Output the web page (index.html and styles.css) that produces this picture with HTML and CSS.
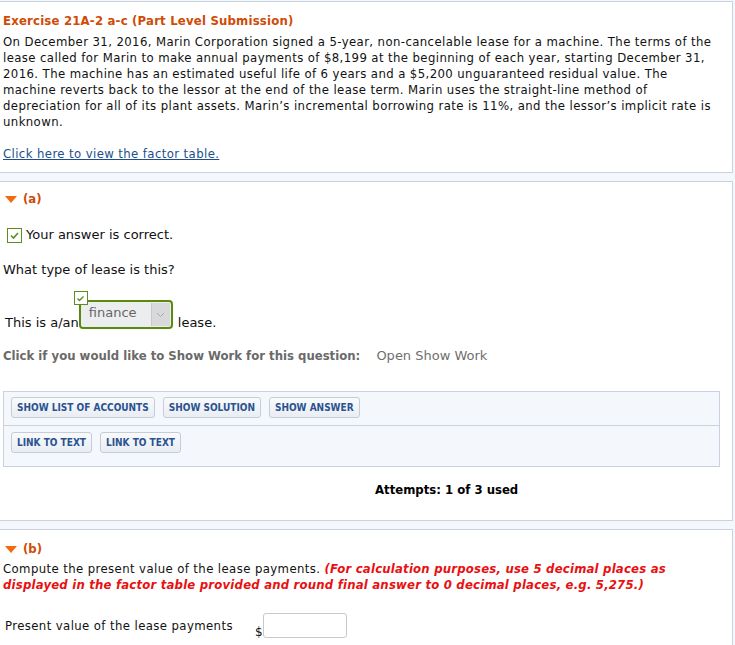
FILE: index.html
```html
<!DOCTYPE html>
<html lang="en">
<head>
  <meta charset="UTF-8">
  <title>Exercise 21A-2 a-c</title>
  <link rel="stylesheet" href="styles.css">
</head>
<body>
  <div class="panel intro">
    <h1 class="exercise-title">Exercise 21A-2 a-c (Part Level Submission)</h1>
    <p class="problem">On December 31, 2016, Marin Corporation signed a 5-year, non-cancelable lease for a machine. The terms of the lease called for Marin to make annual payments of $8,199 at the beginning of each year, starting December 31, 2016. The machine has an estimated useful life of 6 years and a $5,200 unguaranteed residual value. The machine reverts back to the lessor at the end of the lease term. Marin uses the straight-line method of depreciation for all of its plant assets. Marin’s incremental borrowing rate is 11%, and the lessor’s implicit rate is unknown.</p>
    <a class="factor-link" href="#">Click here to view the factor table.</a>
  </div>

  <div class="panel part">
    <div class="part-head"><span class="arrow"></span>(a)</div>

    <div class="correct">
      <span class="check"><svg width="11" height="11" viewBox="0 0 11 11"><path d="M2 5.5 L4.5 8 L9 3" fill="none" stroke="#5b8c1f" stroke-width="1.6"/></svg></span>
      Your answer is correct.
    </div>

    <p class="question">What type of lease is this?</p>

    <div class="answer-row">
      This is a/an
      <span class="select-wrap">
        <span class="mini-check"><svg width="9" height="9" viewBox="0 0 9 9"><path d="M1.5 4.5 L3.5 6.5 L7.5 2.5" fill="none" stroke="#5b8c1f" stroke-width="1.4"/></svg></span>
        <span class="select">
          <span class="select-value">finance</span>
          <span class="select-btn"><svg width="9" height="6" viewBox="0 0 9 6"><path d="M1 1 L4.5 4.5 L8 1" fill="none" stroke="#a9a9a9" stroke-width="1"/></svg></span>
        </span>
      </span>
      lease.
    </div>

    <div class="show-work">
      <b>Click if you would like to Show Work for this question:</b>
      <span class="open-work">Open Show Work</span>
    </div>

    <div class="tools">
      <div class="tool-row">
        <button>Show List of Accounts</button>
        <button>Show Solution</button>
        <button>Show Answer</button>
      </div>
      <div class="tool-row">
        <button>Link to Text</button>
        <button>Link to Text</button>
      </div>
    </div>

    <div class="attempts">Attempts: 1 of 3 used</div>
  </div>

  <div class="panel part last">
    <div class="part-head"><span class="arrow"></span>(b)</div>
    <p class="problem">Compute the present value of the lease payments. <em class="hint">(For calculation purposes, use 5 decimal places as displayed in the factor table provided and round final answer to 0 decimal places, e.g. 5,275.)</em></p>

    <div class="pv-row">
      <span class="pv-label">Present value of the lease payments</span>
      <span class="dollar">$</span>
      <span class="pv-input"></span>
    </div>
  </div>
</body>
</html>
```

FILE: styles.css
```css
/* General */
body {
  margin: 0;
  padding-top: 1px;
  background: #f4f7fb;
  font-family: Verdana, "DejaVu Sans", sans-serif;
  font-size: 13px;
  line-height: 16px;
  color: #111;
  width: 733px;
}

.panel {
  background: #fff;
  border: 1px solid #c9d2de;
  border-left: none;
  margin-bottom: 8px;
}

/* Intro panel */
.intro {
  padding: 11px 16px 10px 3px;
}

.exercise-title {
  margin: 0 0 5px;
  font-family: "DejaVu Sans Condensed", "DejaVu Sans", sans-serif;
  font-stretch: condensed;
  font-size: 13px;
  line-height: 16px;
  letter-spacing: 0.2px;
  color: #cf4b06;
}

.problem {
  margin: 0 0 16px;
  font-family: "DejaVu Sans Condensed", "DejaVu Sans", sans-serif;
  font-stretch: condensed;
  letter-spacing: 0.4px;
}

.factor-link {
  font-family: "DejaVu Sans Condensed", "DejaVu Sans", sans-serif;
  font-stretch: condensed;
  letter-spacing: 0.4px;
  color: #1c4f8c;
  text-decoration: underline;
}

/* Part panels */
.part {
  padding: 9px 12px 22px 3px;
}

.part-head {
  display: flex;
  align-items: center;
  font-family: "DejaVu Sans Condensed", "DejaVu Sans", sans-serif;
  font-weight: bold;
  color: #cf4b06;
  margin-bottom: 20px;
}

.arrow {
  width: 0;
  height: 0;
  margin: 0 6px 0 2px;
  border-left: 6px solid transparent;
  border-right: 6px solid transparent;
  border-top: 7px solid #f26a10;
}

.correct {
  display: flex;
  align-items: center;
  gap: 4px;
  padding-left: 4px;
}

.check {
  display: inline-flex;
  align-items: center;
  justify-content: center;
  width: 13px;
  height: 13px;
  border: 1px solid #5b8c1f;
}

.question {
  margin: 19px 0 0;
}

.answer-row {
  display: flex;
  align-items: flex-end;
  margin-top: 24px;
  padding-left: 2px;
}

.select-wrap {
  position: relative;
  margin: 0 5px 0 0;
  top: -2px;
}

.mini-check {
  position: absolute;
  left: -5px;
  top: -9px;
  width: 12px;
  height: 12px;
  display: flex;
  align-items: center;
  justify-content: center;
  background: #fff;
  border: 1px solid #5b8c1f;
  z-index: 1;
}

.select {
  display: flex;
  width: 90px;
  height: 25px;
  border: 2px solid #5a8a0c;
  border-radius: 4px;
  background: #ecedef;
  box-sizing: content-box;
}

.select-value {
  flex: 1;
  padding: 3px 0 0 8px;
  color: #666;
  line-height: 16px;
}

.select-btn {
  width: 18px;
  margin: 1px 1px 1px 0;
  background: #d8d9db;
  display: flex;
  align-items: center;
  justify-content: center;
  border-left: 1px solid #c9c9c9;
}

.show-work {
  margin-top: 17px;
  color: #6a6a6a;
}

.show-work b {
  font-family: "DejaVu Sans Condensed", "DejaVu Sans", sans-serif;
  font-stretch: condensed;
}

.open-work {
  margin-left: 12px;
  color: #6f6f6f;
}

/* Tool buttons */
.tools {
  margin-top: 27px;
  border: 1px solid #c9d2de;
  background: #f4f7fb;
}

.tool-row {
  display: flex;
  gap: 8px;
  padding: 5px 7px 7px;
  height: 21px;
}

.tool-row + .tool-row {
  border-top: 1px solid #c9d2de;
  padding-top: 6px;
  padding-bottom: 13px;
}

button {
  font-family: "DejaVu Sans Condensed", "DejaVu Sans", sans-serif;
  font-stretch: condensed;
  font-size: 10px;
  font-weight: bold;
  text-transform: uppercase;
  color: #2b5290;
  background: linear-gradient(#f9fafc, #e9edf2);
  border: 1px solid #c4ccd7;
  border-radius: 3px;
  padding: 0 5px;
  height: 21px;
}

.attempts {
  margin: 15px 0 0 372px;
  font-family: "DejaVu Sans Condensed", "DejaVu Sans", sans-serif;
  font-stretch: condensed;
  font-weight: bold;
  color: #000;
}

/* Part (b) */
.last {
  margin-bottom: 0;
  padding-top: 11px;
  padding-bottom: 20px;
}

.last .part-head {
  margin-bottom: 4px;
}

.hint {
  color: #e81010;
  font-weight: bold;
  letter-spacing: 0.2px;
}

.pv-row {
  display: flex;
  align-items: flex-end;
  margin-top: 20px;
  padding-left: 2px;
}

.pv-label {
  font-family: "DejaVu Sans Condensed", "DejaVu Sans", sans-serif;
  font-stretch: condensed;
  letter-spacing: 0.4px;
  margin-bottom: 4px;
}

.dollar {
  margin-left: 22px;
  font-size: 12px;
  line-height: 12px;
}

.pv-input {
  width: 82px;
  height: 23px;
  border: 1px solid #c9c9c9;
  border-radius: 3px;
  background: #fff;
}
```
